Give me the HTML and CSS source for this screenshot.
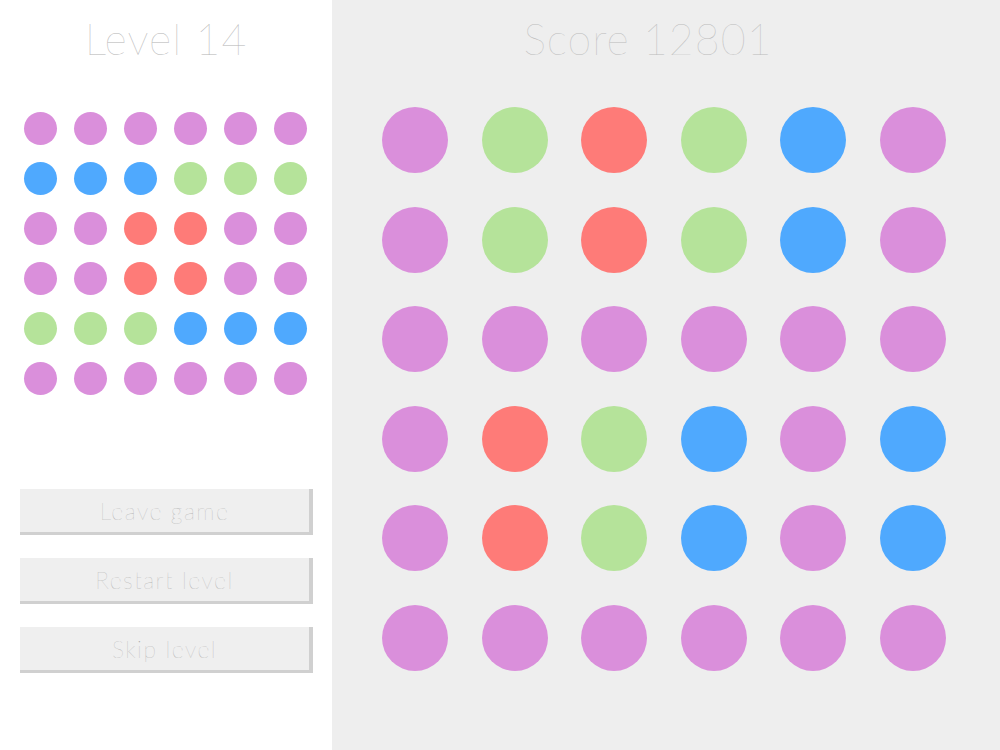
FILE: index.html
```html
<!DOCTYPE html>
<html lang="en">

<head>
  <meta charset="UTF-8">
  <title>Dots</title>
  <link rel="stylesheet" href="styles.css">
</head>

<body>

  <div class="sidebar">
    <h1 class="title">Level 14</h1>

    <div class="target-grid">
      <span class="dot pink"></span><span class="dot pink"></span><span class="dot pink"></span><span class="dot pink"></span><span class="dot pink"></span><span class="dot pink"></span>
      <span class="dot blue"></span><span class="dot blue"></span><span class="dot blue"></span><span class="dot green"></span><span class="dot green"></span><span class="dot green"></span>
      <span class="dot pink"></span><span class="dot pink"></span><span class="dot red"></span><span class="dot red"></span><span class="dot pink"></span><span class="dot pink"></span>
      <span class="dot pink"></span><span class="dot pink"></span><span class="dot red"></span><span class="dot red"></span><span class="dot pink"></span><span class="dot pink"></span>
      <span class="dot green"></span><span class="dot green"></span><span class="dot green"></span><span class="dot blue"></span><span class="dot blue"></span><span class="dot blue"></span>
      <span class="dot pink"></span><span class="dot pink"></span><span class="dot pink"></span><span class="dot pink"></span><span class="dot pink"></span><span class="dot pink"></span>
    </div>

    <div class="menu">
      <button type="button">Leave game</button>
      <button type="button">Restart level</button>
      <button type="button">Skip level</button>
    </div>
  </div>

  <div class="board">
    <h1 class="title score">Score 12801</h1>

    <div class="play-grid">
      <span class="dot pink"></span><span class="dot green"></span><span class="dot red"></span><span class="dot green"></span><span class="dot blue"></span><span class="dot pink"></span>
      <span class="dot pink"></span><span class="dot green"></span><span class="dot red"></span><span class="dot green"></span><span class="dot blue"></span><span class="dot pink"></span>
      <span class="dot pink"></span><span class="dot pink"></span><span class="dot pink"></span><span class="dot pink"></span><span class="dot pink"></span><span class="dot pink"></span>
      <span class="dot pink"></span><span class="dot red"></span><span class="dot green"></span><span class="dot blue"></span><span class="dot pink"></span><span class="dot blue"></span>
      <span class="dot pink"></span><span class="dot red"></span><span class="dot green"></span><span class="dot blue"></span><span class="dot pink"></span><span class="dot blue"></span>
      <span class="dot pink"></span><span class="dot pink"></span><span class="dot pink"></span><span class="dot pink"></span><span class="dot pink"></span><span class="dot pink"></span>
    </div>
  </div>

</body>

</html>
```

FILE: styles.css
```css
* {
  box-sizing: border-box;
}

body {
  margin: 0;
  padding: 0;
  font-family: Lato, 'Open Sans', sans-serif;
  font-weight: 100;
  display: flex;
  height: 750px;
  overflow: hidden;
}

.sidebar {
  width: 332px;
  background: #ffffff;
  display: flex;
  flex-direction: column;
}

.board {
  flex: 1;
  background: #eeeeee;
  display: flex;
  flex-direction: column;
}

.title {
  margin: 0;
  height: 80px;
  line-height: 78px;
  font-size: 43px;
  font-weight: 100;
  color: #b4b4b4;
  text-align: center;
  letter-spacing: 1px;
}

.score {
  padding-right: 36px;
  color: #bcbcbc;
}

.dot {
  display: block;
  border-radius: 50%;
}

.pink {
  background: #da8fdb;
}

.blue {
  background: #4fa9fe;
}

.green {
  background: #b5e39a;
}

.red {
  background: #fe7b78;
}

.target-grid {
  display: grid;
  grid-template-columns: repeat(6, 33px);
  grid-auto-rows: 33px;
  gap: 17px;
  margin: 32px 0 0 24px;
}

.menu {
  display: flex;
  flex-direction: column;
  gap: 23px;
  margin: 94px 0 0 20px;
}

.menu button {
  width: 293px;
  height: 46px;
  padding: 0;
  background: #efefef;
  border: none;
  border-right: 4px solid #d0d0d0;
  border-bottom: 3px solid #d0d0d0;
  border-radius: 0;
  font-family: Lato, 'Open Sans', sans-serif;
  font-weight: 100;
  font-size: 23px;
  color: #a8a8a8;
  letter-spacing: 1.5px;
  cursor: pointer;
}

.play-grid {
  display: grid;
  grid-template-columns: repeat(6, 66px);
  grid-auto-rows: 66px;
  column-gap: 33.6px;
  row-gap: 33.6px;
  margin: 27px 0 0 50px;
}
```
